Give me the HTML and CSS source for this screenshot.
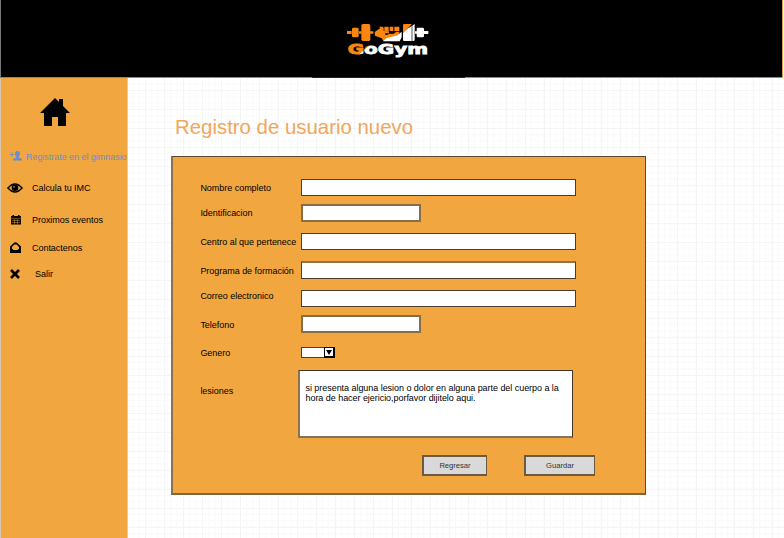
FILE: index.html
```html
<!DOCTYPE html>
<html lang="es">
<head>
<meta charset="utf-8">
<title>GoGym</title>
<link rel="stylesheet" href="styles.css">
</head>
<body>
<header class="header">
  <svg class="logo" width="84" height="36" viewBox="33 24 252 108">
    <defs><linearGradient id="split" gradientUnits="userSpaceOnUse" x1="72" y1="88" x2="102" y2="123"><stop offset=".47" stop-color="#fb8610"/><stop offset=".53" stop-color="#fff"/></linearGradient></defs>
    <g fill="#fb8610">
      <path d="M36 48h14v9H36zM72 49h8v7h-8zM105 49h10v7h-10z"/>
      <rect x="51" y="38" width="20" height="29" rx="4"/>
      <rect x="79" y="27" width="27" height="51" rx="5"/>
      <path d="M119 51l12-8 15-3v8l16 1v6h-12l2 6 12-5h12l8-6h9v4q-2 7-10 9l-27 8-11 7-5-8-20-8z"/>
      <path d="M134 35h11v9h-11zM148 35h13v13h-13zM164 35h11v13h-11zM178 35h15v13h-15z"/>
    </g>
    <g fill="#fff">
      <path d="M144 79l10-9 33-9 13-11v17l-6 12z"/>
      <path d="M204 50l35-23v47q0 4-4 4h-27q-4 0-4-4zM240 49h6v7h-6zM266 48h14v9h-14z"/>
      <rect x="245" y="38" width="22" height="29" rx="4"/>
    </g>
    <path d="M204 55V31q0-4 4-4h23z" fill="#fb8610"/>
    <path d="M231 27v51" stroke="#000" stroke-width="2"/>
    <text class="wordmark" x="38" y="117" textLength="241" lengthAdjust="spacingAndGlyphs">GoGym</text>
  </svg>
</header>
<div class="body">
  <nav class="sidebar">
    <svg class="home" width="30" height="29" viewBox="0 0 30 29"><path d="M15 0l4 4V1h4v7l7 7h-4v13h-8v-9h-6v9H4V15H0z"/></svg>
    <a class="item register"><svg class="icon" width="12" height="10" viewBox="0 0 12 10"><path d="M0 3h1.500V1.500h1V3H4v1H2.500v1.500h-1V4H0zM7.500 0Q10 0 10 2.700 10 4.500 8.800 5.600V6.500L12 8v1.500H3V8l3.200-1.500V5.600Q5 4.500 5 2.700 5 0 7.500 0z"/></svg><span>Registrate en el gimnasio</span></a>
    <a class="item imc"><svg class="icon" width="16" height="10" viewBox="0 0 16 10"><path d="M1 5q7-8 14 0-7 8-14 0z" fill="none" stroke="#000" stroke-width="1.600"/><circle cx="8" cy="4.800" r="3.300"/><circle cx="7" cy="3.800" r=".9" fill="#b17a31"/></svg><span>Calcula tu IMC</span></a>
    <a class="item events"><svg class="icon" width="10" height="10" viewBox="0 0 10 10"><path d="M1.500 0h1.500v1h4V0h1.500v1H10v8.500H0V1h1.500z"/><path d="M0 3.300h10M1 5.300h8M1 7.400h8M3.500 4v5M6.500 4v5" stroke="#c58834" stroke-width=".6"/></svg><span>Proximos eventos</span></a>
    <a class="item contact"><svg class="icon" width="11" height="11" viewBox="0 0 11 11"><path d="M0 4.500L4 .7q1.500-1 3 0l4 3.800V11H0z"/><path d="M2 5l2.300-2.500h2.400L9 5v1.500L7.500 8h-4L2 6.500z" fill="#f2a63f"/></svg><span>Contactenos</span></a>
    <a class="item exit"><svg class="icon" width="10" height="10" viewBox="0 0 10 10"><path d="M1 1l8 8M9 1L1 9" stroke="#000" stroke-width="2.600"/></svg><span>Salir</span></a>
  </nav>
  <main class="main">
    <h1>Registro de usuario nuevo</h1>
    <form class="panel">
      <div class="row r1"><label>Nombre completo</label><div class="field"></div></div>
      <div class="row r2"><label>Identificacion</label><div class="field short"></div></div>
      <div class="row r3"><label>Centro al que pertenece</label><div class="field"></div></div>
      <div class="row r4"><label>Programa de formación</label><div class="field soft"></div></div>
      <div class="row r5"><label>Correo electronico</label><div class="field"></div></div>
      <div class="row r6"><label>Telefono</label><div class="field short"></div></div>
      <div class="row r7"><label>Genero</label><div class="select"><div class="arrow"><svg width="6" height="5" viewBox="0 0 6 5"><path d="M0 0h6L3 5z"/></svg></div></div></div>
      <div class="row r8"><label>lesiones</label><div class="area"><div>si presenta alguna lesion o dolor en alguna parte del cuerpo a la</div><div>hora de hacer ejericio,porfavor dijitelo aqui.</div></div></div>
      <div class="actions"><div class="btn">Regresar</div><div class="btn save">Guardar</div></div>
    </form>
  </main>
</div>
</body>
</html>
```
FILE: styles.css
```css
* { box-sizing: border-box; }
body { margin: 0; width: 784px; height: 538px; overflow: hidden; font: 9px/10px "Liberation Sans", Arial, sans-serif; color: #000; background: #fff; }
.header { width: 783px; height: 78px; background: linear-gradient(90deg, #b9823c 311px, #2e210f 311px, #2e210f 464px, #b9823c 464px) 0 77px / 100% 1px no-repeat #000; border-right: 1px solid #d9a050; border-left: 1px solid #777; padding: 23px 0 0 345px; }
.logo { display: block; }
.wordmark { font: bold 41px "DejaVu Sans", sans-serif; fill: url(#split); stroke: url(#split); stroke-width: 2.500px; }
.body { display: flex; height: 460px; }
.sidebar { width: 128px; height: 460px; background: #f2a63f; border-left: 1px solid #d8c8b0; border-right: 1px solid #e5cba5; flex: none; }
.home { display: block; margin: 20px 0 0 39px; }
.item { display: flex; align-items: center; height: 12px; white-space: nowrap; }
.icon { flex: none; }
.register { margin: 24px 0 0 9px; color: #6b8fce; letter-spacing: -0.040px; }
.register .icon { fill: #6b8fce; margin-top: -2px; }
.register span { margin-left: 4px; }
.imc { margin: 19px 0 0 6px; }
.imc span { margin-left: 9px; letter-spacing: -0.040px; }
.events { margin: 20px 0 0 10px; }
.events span { margin-left: 11px; letter-spacing: -0.040px; }
.contact { margin: 16px 0 0 9px; }
.contact .icon { margin-top: -2px; }
.contact span { margin-left: 11px; letter-spacing: -0.040px; }
.exit { margin: 14px 0 0 9px; }
.exit span { margin-left: 15px; }
.main { flex: 1; padding: 38px 0 0 43px; background-color: #fff; background-image: linear-gradient(90deg, #f5f5f5 1px, transparent 1px), linear-gradient(#f5f5f5 1px, transparent 1px), linear-gradient(90deg, #fafafa 1px, transparent 1px), linear-gradient(#fafafa 1px, transparent 1px); background-size: 19px 19px, 19px 19px, 6.333px 6.333px, 6.333px 6.333px; background-position: 17px 12px, 17px 12px, 17px 12px, 17px 12px; }
h1 { margin: 0 0 17px 4px; font-size: 20.400px; line-height: 23px; font-weight: 400; color: #f2a65a; white-space: nowrap; }
.panel { display: block; width: 475px; height: 339px; background: #f2a63f; border: 1px solid #5a4830; border-left: 2px solid #8a7355; border-bottom: 2px solid #80663f; padding: 22px 0 0 27px; }
.row { display: flex; align-items: flex-start; }
.row label { width: 101px; flex: none; white-space: nowrap; padding-left: 0.400px; letter-spacing: -0.030px; }
.field { width: 275px; height: 17px; background: #fff; border: 1px solid #4b3d2b; }
.field.short { width: 120px; height: 18px; border: 2px solid #886d48; }
.field.soft { height: 18px; border-top: 2px solid #947447; }
.r1 label { margin-top: 4px; }
.r2 { margin-top: 8px; }
.r2 label { margin-top: 4px; }
.r3 { margin-top: 11px; }
.r3 label { margin-top: 4px; }
.r4 { margin-top: 11px; }
.r4 label { margin-top: 5px; }
.r5 { margin-top: 11px; }
.r5 label { margin-top: 1px; }
.r6 { margin-top: 8px; }
.r6 label { margin-top: 5px; }
.r7 { margin-top: 14px; }
.r7 label { margin-top: 1px; }
.select { display: flex; justify-content: flex-end; width: 34px; height: 11px; margin-bottom: 1px; background: #fff; border: 1px solid #4b3d2b; }
.arrow { width: 11px; height: 11px; margin: -1px -1px 0 0; border: 1px solid #000; border-width: 1px 2px 2px 1px; display: flex; align-items: center; justify-content: center; flex: none; }
.r8 { margin-top: 11px; }
.r8 label { width: 98px; margin-top: 16px; }
.area { width: 275px; height: 68px; background: #fff; border: 1px solid #443628; border-left: 2px solid #8a7355; border-bottom: 2px solid #80735f; padding: 12px 0 0 5.500px; white-space: nowrap; letter-spacing: -0.045px; }
.actions { display: flex; margin: 17px 0 0 222px; }
.btn { width: 65px; height: 21px; background: #d9d9d9; border: 1px solid #6c5a42; border-width: 2px 1px 2px 2px; text-align: center; font-size: 7.600px; line-height: 17px; color: #333; }
.save { width: 71px; margin-left: 37px; }
```
